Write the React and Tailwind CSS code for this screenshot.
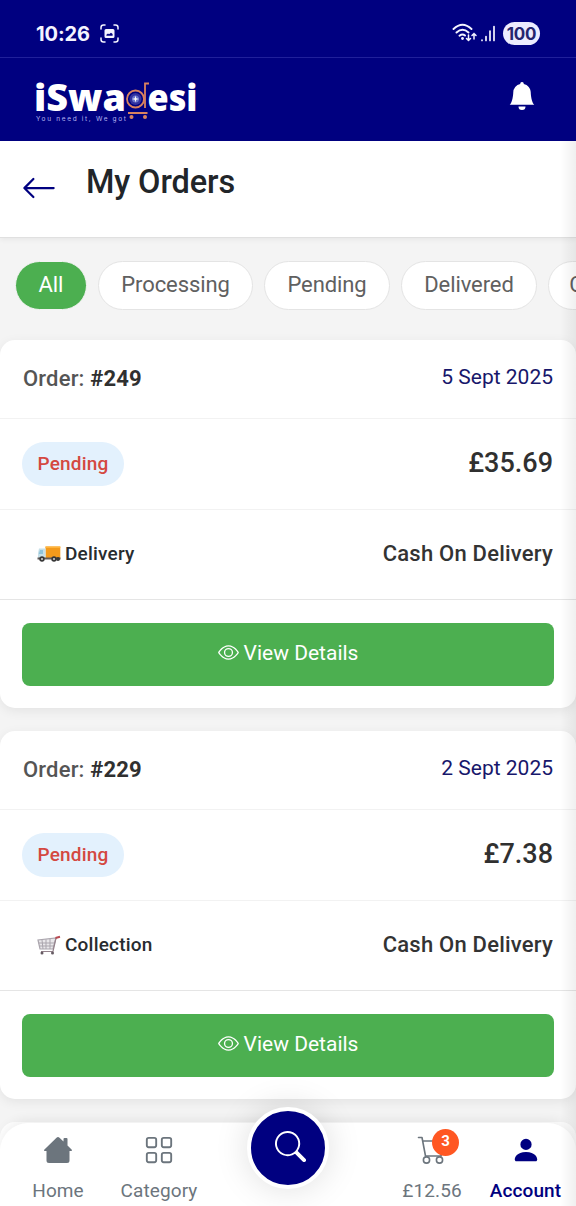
import React from "react";
import { BsArrowLeft, BsBellFill, BsEye, BsGrid, BsPersonFill, BsSearch } from "react-icons/bs";

function StatusBar() {
  return (
    <div className="flex h-[58px] shrink-0 items-center border-b border-[#20209a] pt-[9px] pl-[36px] pr-[36px] text-[#f4f4ff]">
      <span className="w-[64px] pt-px font-['Inter',sans-serif] text-[20px] leading-6 font-bold tracking-[-0.1px]">10:26</span>
      <svg className="h-[19px] w-[19px]" viewBox="0 0 19 19" fill="none" stroke="currentColor" strokeWidth="1.5" strokeLinecap="round">
        <path d="M1 5V3.5Q1 1 3.5 1H5M14 1h1.500Q18 1 18 3.500V5M18 14v1.500Q18 18 15.500 18H14M5 18H3.500Q1 18 1 15.500V14" />
        <path fillRule="evenodd" fill="currentColor" stroke="none" d="M6 5h7a1.500 1.500 0 0 1 1.500 1.500v6a1.500 1.500 0 0 1-1.500 1.500H6a1.500 1.500 0 0 1-1.500-1.500v-6A1.500 1.500 0 0 1 6 5Zm.4 6.700h6.200V10l-1.600-1.200-2 1.500-1-.7-1.600 1.200Z" />
      </svg>
      <svg className="ml-auto h-[20px] w-[26px]" viewBox="0 0 26 20" fill="none" stroke="currentColor" strokeWidth="1.9" strokeLinecap="round">
        <path d="M1.500 6Q10.500-2.500 19.500 6M4.500 9.500Q10.500 4 16.500 9.500M7.500 12.700Q10.500 10.300 13 12.500" />
        <circle cx="10.500" cy="15.500" r="1.400" fill="currentColor" stroke="none" />
        <path strokeWidth="1.500" d="M16.500 12v5.500m-2-2 2 2 2-2M22 16v-5.500m-2 2 2-2 2 2" />
      </svg>
      <svg className="ml-[2px] h-[17px] w-[16px]" viewBox="0 0 16 17" stroke="currentColor" strokeWidth="1.700" strokeLinecap="round">
        <path d="M2 15v.5M6 11.500v4M10 6v9.500M14 1.500v14" />
      </svg>
      <span className="ml-[7px] flex h-[23px] w-[37px] items-center justify-center rounded-full bg-[#ececff] pt-[2px] font-['Inter',sans-serif] text-[17px] leading-5 font-bold tracking-[-0.3px] text-[#25256f]">100</span>
    </div>
  );
}

function Logo() {
  return (
    <svg className="h-[52px] w-[170px] overflow-visible" viewBox="30 76 170 52">
      <g fill="#fff" fontFamily="'Open Sans', 'Noto Sans', sans-serif" fontWeight="800" fontSize="37">
        <text x="34" y="110.500" textLength="92" lengthAdjust="spacingAndGlyphs">iSwa</text>
        <text x="147.500" y="110.500" textLength="50" lengthAdjust="spacingAndGlyphs">esi</text>
      </g>
      <text x="36" y="121" fontFamily="Inter, sans-serif" fontSize="6.500" fill="#b4b4f0" textLength="90">You need it, We got</text>
      <g fill="none" stroke="#d9825f" strokeWidth="1.800">
        <circle cx="135.500" cy="99" r="8.500" />
        <path d="M149 83.500h-4V108M128 113h19.500" />
      </g>
      <circle cx="135.500" cy="99" r="6" fill="#31319e" />
      <circle cx="135.500" cy="99" r="3.500" fill="#6974cc" />
      <path d="M135.500 95.500l.7 2.800 2.800.7-2.800.7-.7 2.800-.7-2.800-2.800-.7 2.800-.7Z" fill="#fff" />
      <circle cx="131.500" cy="117" r="2" fill="#d9825f" />
      <circle cx="145" cy="117" r="2" fill="#d9825f" />
    </svg>
  );
}

function Chip({ label, active, width }) {
  return (
    <div className={`flex h-[49px] shrink-0 items-center justify-center rounded-full border pb-[2px] text-[22px] tracking-[-0.1px] ${width} ${active ? "border-[#f4f4f4] bg-[#4caf50] text-white" : "border-[#e4e4e4] bg-white text-[#606060]"}`}>
      {label}
    </div>
  );
}

function Truck() {
  return (
    <svg className="h-[18px] w-[24px]" viewBox="0 0 24 18">
      <path d="M8.500 1.500h14.800v12H8.500Z" fill="#f39a1c" />
      <path d="M8.500 1.500h14.800v1.500H8.500Z" fill="#ffb43c" />
      <path d="M2 3.500h6.500v10H1V8Z" fill="#c6dfe8" />
      <path d="M3 5h3v4H1.800Z" fill="#8fc4dc" />
      <path d="M.5 12.500h23v2H.5Z" fill="#625b59" />
      <g fill="#383838"><circle cx="5" cy="14" r="2.700" /><circle cx="17" cy="14" r="2.700" /><circle cx="21" cy="14" r="2" /></g>
      <g fill="#ccc"><circle cx="5" cy="14" r="1.100" /><circle cx="17" cy="14" r="1.100" /></g>
    </svg>
  );
}

function Trolley() {
  return (
    <svg className="h-[20px] w-[24px]" viewBox="0 0 24 20" fill="none">
      <path d="M1 5l2 9h13l3-11Z" fill="#e9e7ea" stroke="#aaa5ad" strokeWidth="1.200" />
      <path d="M1.500 8h16M2.300 11H17M5 5l1 9M9 4.500V14M13 4v10" stroke="#aaa5ad" />
      <path d="M4 16.500h12l3-13.500" stroke="#94828c" strokeWidth="1.200" />
      <path d="M18.500 3l4.500-1.200" stroke="#b94a52" strokeWidth="2" />
      <circle cx="5" cy="18" r="1.500" fill="#665b63" /><circle cx="15.500" cy="18" r="1.500" fill="#665b63" />
    </svg>
  );
}

function OrderCard({ id, date, price, method, icon }) {
  return (
    <section className="h-[368px] shrink-0 rounded-[15px] bg-white shadow-[0_3px_12px_rgba(0,0,0,0.07)]">
      <div className="flex h-[79px] items-center justify-between border-b border-[#f2f2f2] px-[23px]">
        <p className="pb-[2px] text-[22px] font-medium tracking-[0.18px] text-[#555]">Order: <span className="font-bold text-[#303030]">#{id}</span></p>
        <p className="pb-[2px] text-[21px] text-[#17176b]">{date}</p>
      </div>
      <div className="flex h-[91px] items-center justify-between border-b border-[#f2f2f2] pr-[23px] pl-[22px]">
        <span className="flex h-[44px] w-[102px] items-center justify-center rounded-full bg-[#e3f1fd] text-[19px] font-medium tracking-[0.2px] text-[#d44840]">Pending</span>
        <span className="pb-[2px] text-[27px] font-medium text-[#303030]">{price}</span>
      </div>
      <div className="flex h-[90px] items-center justify-between border-b border-[#e5e5e5] pr-[23px] pl-[22px] pb-[2px]">
        <span className="flex items-center gap-[4px] pl-[15px] text-[19px] font-medium tracking-[0.2px] text-[#282c2f]">{icon}<span className="pt-px">{method}</span></span>
        <span className="text-[22px] font-medium tracking-[0.22px] text-[#333]">Cash On Delivery</span>
      </div>
      <div className="px-[22px] pt-[23px]">
        <button className="flex h-[63px] w-full items-center justify-center gap-[5px] rounded-[8px] bg-[#4caf50] pb-[2px] text-[21px] text-white">
          <BsEye className="h-[21px] w-[21px] -translate-y-px" />View Details
        </button>
      </div>
    </section>
  );
}

function NavItem({ icon, label, width, active }) {
  return (
    <div className={`flex shrink-0 flex-col items-center pt-[12px] text-[19px] leading-6 ${width} ${active ? "font-medium text-[#000080]" : "text-[#6c757d]"}`}>
      <div className="flex h-[30px] items-center">{icon}</div>
      <span className="mt-[14px] tracking-[0.1px]">{label}</span>
    </div>
  );
}

function HomeIcon() {
  return (
    <svg className="h-[28px] w-[30px]" viewBox="0 0 30 28" fill="currentColor">
      <path d="M13.500 1.700Q15 .5 16.500 1.700L20.500 5.500V3Q20.500 2 21.500 2h2Q24.500 2 24.500 3v6.500l4.300 4.200q.6.800-.4 1.300h-1.900v9.500q0 2.500-2.500 2.500H6q-2.500 0-2.500-2.500V15H1.600q-1-.5-.4-1.300Z" />
    </svg>
  );
}

function CartIcon() {
  return (
    <div className="relative">
      <svg className="h-[30px] w-[30px]" viewBox="0 0 30 30" fill="none" stroke="currentColor" strokeWidth="1.600" strokeLinecap="round" strokeLinejoin="round">
        <path d="M1.500 2.500h3.500L8.500 21H24L27 6H5.700" />
        <circle cx="9.500" cy="25" r="3.100" /><circle cx="22.500" cy="25" r="3.100" />
      </svg>
      <span className="absolute -top-[6px] left-[15px] flex h-[27px] w-[27px] items-center justify-center rounded-full bg-[#ff5722] pb-[3px] text-[15px] font-bold text-white">3</span>
    </div>
  );
}

function BottomNav() {
  return (
    <nav className="absolute bottom-0 left-0 flex h-[83px] w-full rounded-t-[28px] bg-white shadow-[0_-3px_12px_rgba(0,0,0,0.07)]">
      <NavItem width="w-[116px]" icon={<HomeIcon />} label="Home" />
      <NavItem width="w-[86px]" icon={<BsGrid className="h-[30px] w-[30px]" />} label="Category" />
      <div className="flex w-[172px] justify-center">
        <div className="-mt-[16px] flex h-[82px] w-[82px] items-center justify-center rounded-full border-[4px] border-white bg-[#000080] text-white shadow-[0_0_34px_rgba(0,0,0,0.13)]">
          <BsSearch className="ml-[4px] h-[31px] w-[31px] -translate-y-[2px]" />
        </div>
      </div>
      <NavItem width="w-[116px]" icon={<CartIcon />} label="£12.56" />
      <NavItem active width="w-[71px]" icon={<BsPersonFill className="h-[30px] w-[30px]" />} label="Account" />
    </nav>
  );
}

export default function App() {
  return (
    <div className="relative flex h-[1206px] w-[576px] flex-col overflow-hidden bg-[#f4f4f4] font-['Roboto',sans-serif]">
      <header className="h-[141px] shrink-0 bg-[#000080]">
        <StatusBar />
        <div className="flex h-[83px] items-start justify-between pt-[18px] pr-[40px] pl-[30px]">
          <Logo />
          <BsBellFill className="mt-[6px] h-[28px] w-[28px] text-white" />
        </div>
      </header>
      <div className="flex h-[97px] shrink-0 items-start border-b border-[#e0e0e0] bg-white pl-[21px] shadow-[0_2px_5px_rgba(0,0,0,0.05)]">
        <BsArrowLeft className="mt-[29px] h-[36px] w-[36px] text-[#000080]" />
        <h1 className="mt-[21px] ml-[29px] text-[32.500px] leading-10 font-medium tracking-[-0.1px] text-[#212529]">My Orders</h1>
      </div>
      <div className="mt-[23px] mb-[30px] flex shrink-0 gap-[11px] pl-[15px]">
        <Chip active width="w-[72px]" label="All" />
        <Chip width="w-[155px]" label="Processing" />
        <Chip width="w-[126px]" label="Pending" />
        <Chip width="w-[136px]" label="Delivered" />
        <Chip width="w-[138px]" label="Cancelled" />
      </div>
      <main className="flex flex-col gap-[23px]">
        <OrderCard id="249" date="5 Sept 2025" price="£35.69" method="Delivery" icon={<Truck />} />
        <OrderCard id="229" date="2 Sept 2025" price="£7.38" method="Collection" icon={<Trolley />} />
        <div className="h-[90px] shrink-0 rounded-[15px] bg-white" />
      </main>
      <BottomNav />
      <div className="pointer-events-none absolute top-[141px] right-0 bottom-0 w-[16px] bg-gradient-to-r from-transparent to-black/[0.06]" />
    </div>
  );
}
